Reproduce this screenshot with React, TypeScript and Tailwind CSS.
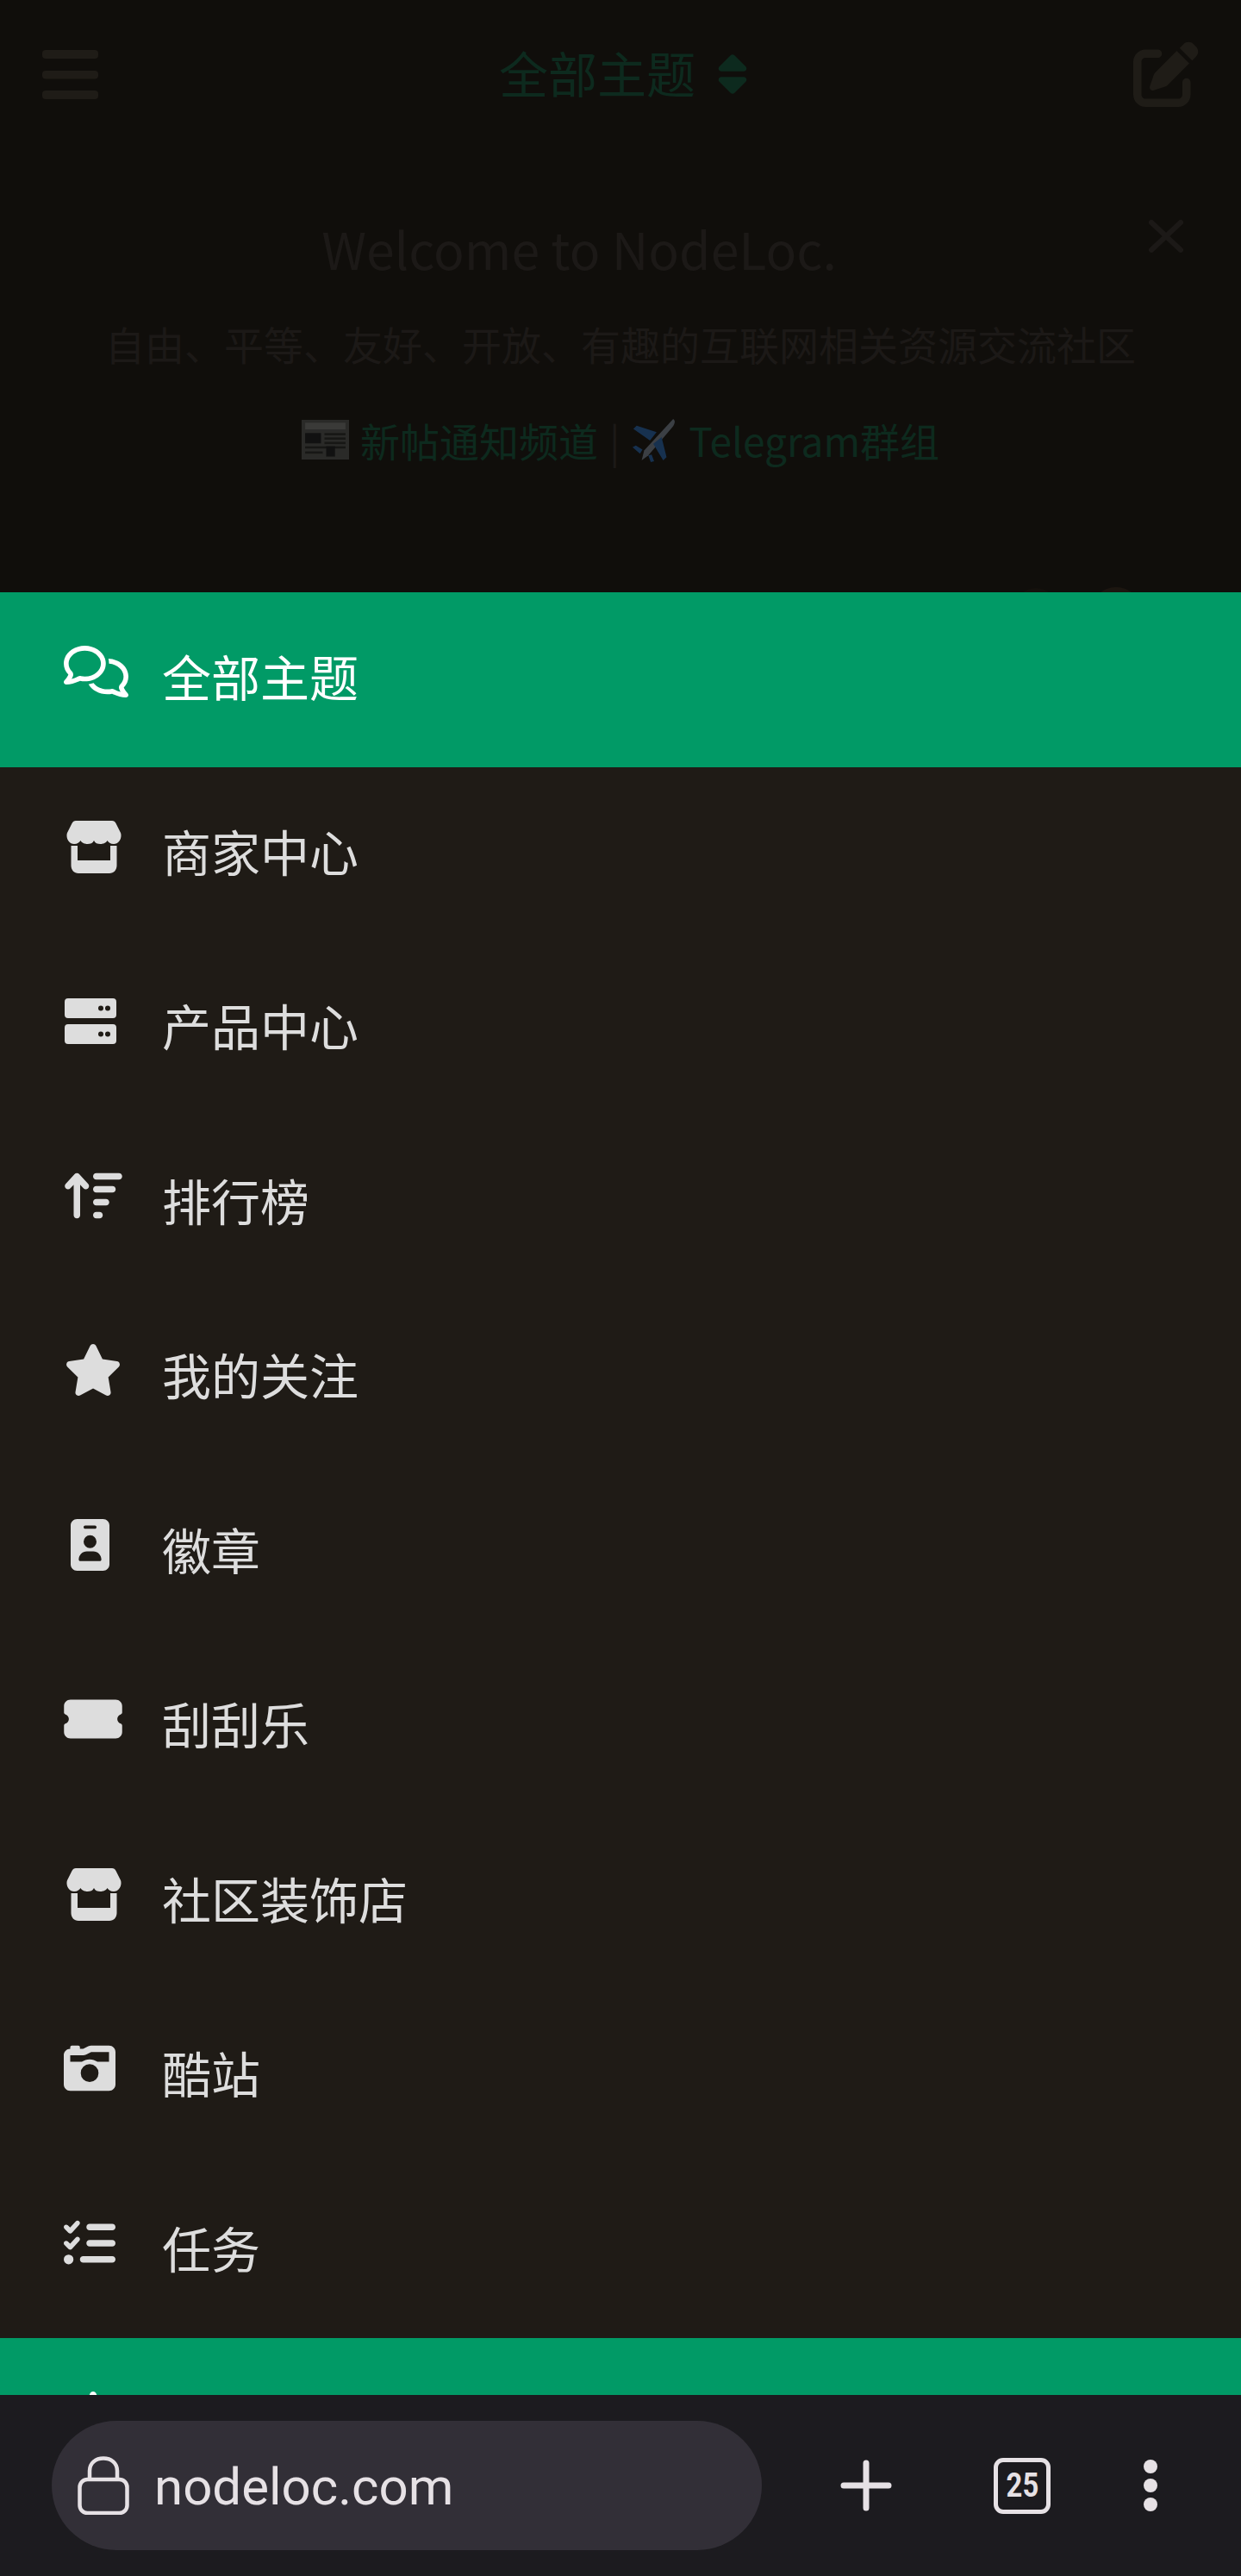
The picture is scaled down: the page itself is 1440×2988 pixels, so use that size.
import {
  FaArrowUpWideShort,
  FaCameraRetro,
  FaIdBadge,
  FaListCheck,
  FaPenToSquare,
  FaRegComments,
  FaSort,
  FaStar,
  FaTicketSimple,
} from "react-icons/fa6";
import type { ReactNode } from "react";

const cjk = "font-['Noto_Sans_CJK_SC','Roboto',sans-serif]";

function ShopIcon({ className }: { className?: string }) {
  return (
    <svg viewBox="0 0 64 61" className={className} fill="currentColor">
      <path d="M11 0H53C55 0 56.500 1 57.500 3L63 14C65 20 61 27 55 27C51 27 49 25 47.500 23C46 26 42 27 39.500 27C36 27 33.500 26 32 23C30.500 26 28 27 24.500 27C22 27 18 26 16.500 23C15 25 13 27 9 27C3 27 -1 20 1 14L6.500 3C7.500 1 9 0 11 0Z" />
      <path d="M5.500 29H13V46H51V29H58.500V52C58.500 57 55 61 50 61H14C9 61 5.500 57 5.500 52Z" />
    </svg>
  );
}

function ServerIcon({ className }: { className?: string }) {
  return (
    <svg viewBox="0 0 60 60" className={className} fill="currentColor">
      <path
        fillRule="evenodd"
        d="M4 4H56A4 4 0 0 1 60 8V23A4 4 0 0 1 56 27H4A4 4 0 0 1 0 23V8A4 4 0 0 1 4 4ZM42 12.500A3 3 0 1 0 42 18.500A3 3 0 1 0 42 12.500ZM50 12.500A3 3 0 1 0 50 18.500A3 3 0 1 0 50 12.500Z"
      />
      <path
        fillRule="evenodd"
        d="M4 34H56A4 4 0 0 1 60 38V53A4 4 0 0 1 56 57H4A4 4 0 0 1 0 53V38A4 4 0 0 1 4 34ZM42 42.500A3 3 0 1 0 42 48.500A3 3 0 1 0 42 42.500ZM50 42.500A3 3 0 1 0 50 48.500A3 3 0 1 0 50 42.500Z"
      />
    </svg>
  );
}

function BarsIcon() {
  return (
    <svg viewBox="0 0 65 57" className="w-[65px] h-[57px]" fill="currentColor">
      <rect x="0" y="0" width="65" height="10" rx="4" />
      <rect x="0" y="24" width="65" height="9.500" rx="4" />
      <rect x="0" y="47" width="65" height="10" rx="4" />
    </svg>
  );
}

function LockIcon() {
  return (
    <svg viewBox="0 0 60 68" className="w-[60px] h-[68px] shrink-0" fill="none" stroke="#e6e1e5" strokeWidth="4.500">
      <rect x="2.500" y="27" width="55" height="39" rx="9" />
      <path d="M14 27V17C14 8 21 2.500 30 2.500S46 8 46 17v10" />
    </svg>
  );
}

function NewspaperEmoji() {
  return (
    <svg viewBox="0 0 54 54" preserveAspectRatio="none" className="w-[55px] h-[46px]">
      <rect x="0" y="0" width="54" height="54" fill="#2a2a28" />
      <rect x="4" y="4" width="46" height="9" fill="#3a3a38" />
      <rect x="4" y="18" width="18" height="14" fill="#111" />
      <rect x="26" y="18" width="24" height="3" fill="#171715" />
      <rect x="26" y="24" width="24" height="3" fill="#171715" />
      <rect x="26" y="30" width="24" height="3" fill="#171715" />
      <rect x="4" y="36" width="46" height="3" fill="#171715" />
      <rect x="4" y="43" width="20" height="3" fill="#171715" />
      <rect x="28" y="36" width="10" height="14" fill="#111" />
    </svg>
  );
}

function PlaneEmoji() {
  return (
    <svg viewBox="0 0 54 54" className="w-[54px] h-[52px]">
      <path d="M50 2c3 2 2 6-1 10L20 46l-8 6 3-12z" fill="#3b3f44" />
      <path d="M2 14l4-4 24 8-8 10zM26 32l10-8 6 24-4 4z" fill="#17314f" />
      <path d="M1 36l4-2 8 5-3 5zM20 46l4-1 3 8-4 1z" fill="#17314f" />
    </svg>
  );
}

type MenuItem = { label: string; icon: ReactNode; active?: boolean };

const menu: MenuItem[] = [
  { label: "全部主题", icon: <FaRegComments className="w-[75px] h-[60px]" />, active: true },
  { label: "商家中心", icon: <ShopIcon className="w-[64px] h-[61px] ml-[3px]" /> },
  { label: "产品中心", icon: <ServerIcon className="w-[60px] h-[60px] ml-[1px]" /> },
  { label: "排行榜", icon: <FaArrowUpWideShort className="w-[68px] h-[60px]" /> },
  { label: "我的关注", icon: <FaStar className="w-[68px] h-[60px]" /> },
  { label: "徽章", icon: <FaIdBadge className="w-[45px] h-[60px] ml-[8px]" /> },
  { label: "刮刮乐", icon: <FaTicketSimple className="w-[68px] h-[60px]" /> },
  { label: "社区装饰店", icon: <ShopIcon className="w-[64px] h-[61px] ml-[3px]" /> },
  { label: "酷站", icon: <FaCameraRetro className="w-[60px] h-[60px]" /> },
  { label: "任务", icon: <FaListCheck className="w-[60px] h-[60px]" /> },
  { label: "", icon: <FaStar className="w-[68px] h-[60px] text-white" />, active: true },
];

function MenuRow({ item }: { item: MenuItem }) {
  return (
    <div className={`h-[202.500px] shrink-0 flex items-start pl-[74px] pt-[62px] ${item.active ? "bg-[#019a66] text-white" : "text-[#dddddd]"}`}>
      <div className="w-[114px] shrink-0 flex">{item.icon}</div>
      <span className="text-[57px] leading-[76px] -mt-[4px]">{item.label}</span>
    </div>
  );
}

export default function App() {
  return (
    <div className={`w-[1440px] h-[2988px] flex flex-col overflow-hidden bg-[#100e0b] ${cjk}`}>
      {/* dimmed page behind the drawer */}
      <div className="h-[687px] shrink-0 overflow-hidden relative">
        <div className="h-[172px] flex items-center justify-between pl-[49px] pr-[49px]">
          <div className="text-[#1f1c17]">
            <BarsIcon />
          </div>
          <div className="ml-[19px] flex items-center gap-[24px] text-[#0d2a1e]">
            <span className="text-[57px] leading-none -mt-[6px]">全部主题</span>
            <FaSort className="w-[38px] h-[52px]" />
          </div>
          <FaPenToSquare className="w-[76px] h-[76px] text-[#1f1c17]" />
        </div>
        <div className="flex flex-col items-center text-[#1c1917]">
          <div className="mt-[78px] pr-[96px] text-[59px] leading-[76px]">Welcome to NodeLoc.</div>
          <div className="mt-[34px] text-[46px] leading-[76px]">自由、平等、友好、开放、有趣的互联网相关资源交流社区</div>
          <div className="mt-[36px] text-[46px] leading-[76px] flex items-center gap-[13px]">
            <NewspaperEmoji />
            <span className="text-[#0d2a1e]">新帖通知频道</span>
            <span>|</span>
            <PlaneEmoji />
            <span className="text-[#0d2a1e]">Telegram群组</span>
          </div>
        </div>
        <svg viewBox="0 0 40 38" className="absolute left-[1333px] top-[255px] w-[40px] h-[38px] text-[#1c1917]" stroke="currentColor" strokeWidth="6" strokeLinecap="round">
          <path d="M3 3L37 35M37 3L3 35" />
        </svg>
        <div className="absolute left-[1177px] top-[682px] w-[50px] h-[50px] rounded-full bg-[#15110d]" />
        <div className="absolute left-[1265px] top-[681px] w-[60px] h-[60px] rounded-full bg-[#1c1610]" />
      </div>

      {/* drawer, cut off by the browser bar */}
      <div className="flex-1 min-h-0 overflow-hidden bg-[#1f1b16]">
        {menu.map((item, i) => (
          <MenuRow key={i} item={item} />
        ))}
      </div>

      {/* browser toolbar */}
      <div className="h-[210px] shrink-0 bg-[#1c1b1f] flex items-center pl-[60px] text-[#e6e1e5]">
        <div className="w-[824px] h-[150px] rounded-full bg-[#322f37] flex items-center pl-[30px] gap-[29px]">
          <LockIcon />
          <span className="text-[60px] leading-none font-['Roboto',sans-serif] mt-[4px]">nodeloc.com</span>
        </div>
        <svg viewBox="0 0 60 60" className="w-[60px] h-[60px] ml-[91px]" stroke="#e6e1e5" strokeWidth="7" strokeLinecap="round">
          <path d="M30 4v52M4 30h52" />
        </svg>
        <div className="ml-[118px] w-[66px] h-[65px] border-[5px] border-[#e6e1e5] rounded-[11px] flex items-center justify-center text-[39px] font-bold font-['Roboto',sans-serif]">
          <span className="inline-block scale-x-[0.84]">25</span>
        </div>
        <div className="ml-[108px] flex flex-col gap-[6px]">
          <div className="w-[16px] h-[16px] rounded-full bg-[#e6e1e5]" />
          <div className="w-[16px] h-[16px] rounded-full bg-[#e6e1e5]" />
          <div className="w-[16px] h-[16px] rounded-full bg-[#e6e1e5]" />
        </div>
      </div>
    </div>
  );
}
